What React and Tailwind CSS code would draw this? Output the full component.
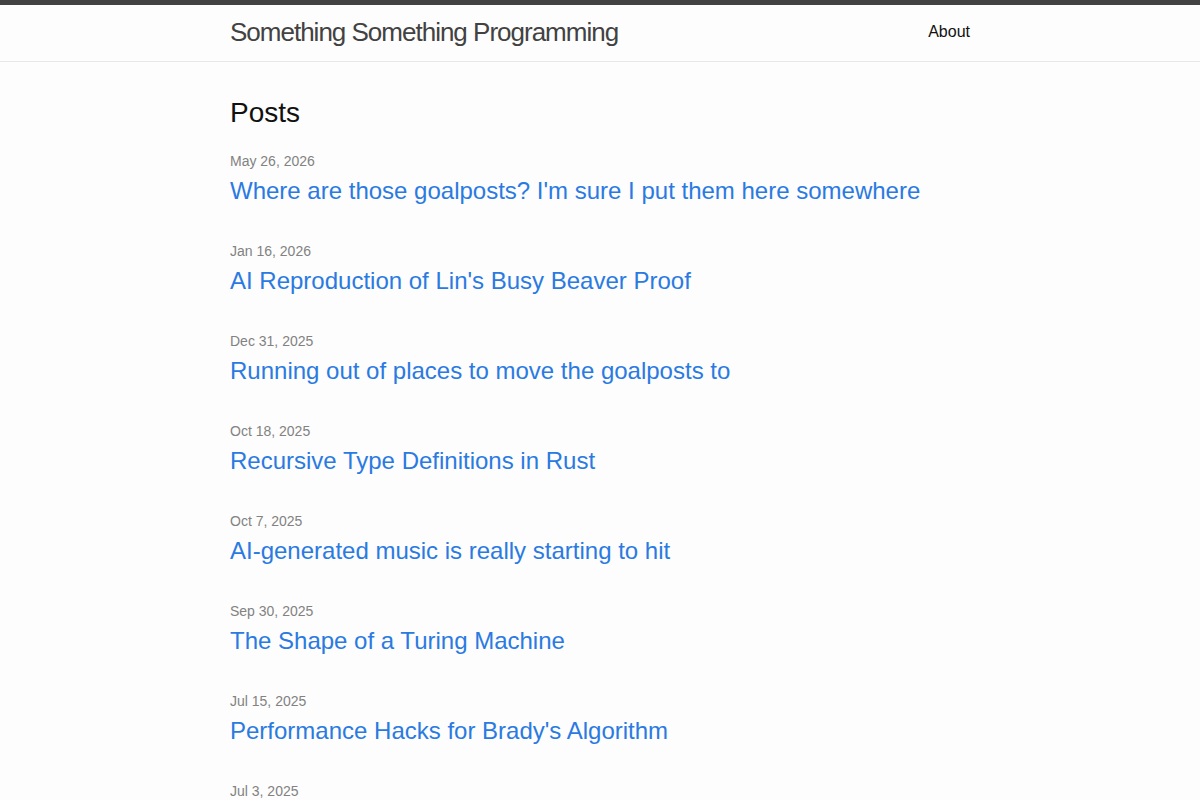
export default function App() {
  const posts = [
    ["May 26, 2026", "Where are those goalposts? I'm sure I put them here somewhere"],
    ["Jan 16, 2026", "AI Reproduction of Lin's Busy Beaver Proof"],
    ["Dec 31, 2025", "Running out of places to move the goalposts to"],
    ["Oct 18, 2025", "Recursive Type Definitions in Rust"],
    ["Oct 7, 2025", "AI-generated music is really starting to hit"],
    ["Sep 30, 2025", "The Shape of a Turing Machine"],
    ["Jul 15, 2025", "Performance Hacks for Brady's Algorithm"],
    ["Jul 3, 2025", "Notes on Something"],
  ];
  return (
    <div className="min-h-screen bg-[#fdfdfd] text-[#111111] text-[16px] leading-[1.5]" style={{ fontFamily: '"Liberation Sans", Arial, sans-serif' }}>
      <header className="border-t-[5px] border-t-[#424242] border-b border-b-[#e8e8e8] min-h-[62px]">
        <div className="max-w-[740px] mx-auto flex justify-between items-start">
          <a className="text-[26px] font-light leading-[54px] tracking-[-1px] text-[#424242]">Something Something Programming</a>
          <nav className="leading-[54px]">
            <a className="text-[#111111]">About</a>
          </nav>
        </div>
      </header>
      <main className="py-[30px]">
        <div className="max-w-[740px] mx-auto">
          <h2 className="text-[28px] leading-[1.5] mb-[15px]">Posts</h2>
          <ul>
            {posts.map(([d, t]) => (
              <li key={d} className="mb-[30px]">
                <span className="text-[14px] text-[#828282]">{d}</span>
                <h3 className="text-[24px] leading-[1.5]">
                  <a className="block text-[#2a7ae2]">{t}</a>
                </h3>
              </li>
            ))}
          </ul>
        </div>
      </main>
    </div>
  );
}
